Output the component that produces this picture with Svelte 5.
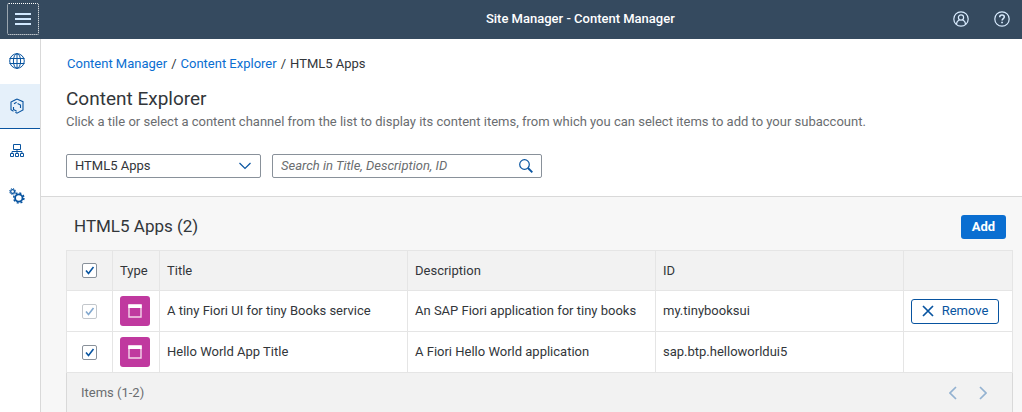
<script>
  const apps = $state([
    { title: 'A tiny Fiori UI for tiny Books service', description: 'An SAP Fiori application for tiny books', id: 'my.tinybooksui', checked: true, added: true },
    { title: 'Hello World App Title', description: 'A Fiori Hello World application', id: 'sap.btp.helloworldui5', checked: true, added: false }
  ]);
  let all = $state(true);
</script>

<div class="shell">
  <header class="bar">
    <button class="menu" aria-label="Menu">
      <svg width="16" height="12" viewBox="0 0 16 12"><path d="M0 1h16M0 6h16M0 11h16" stroke="#d1e8ff" stroke-width="2" /></svg>
    </button>
    <h1>Site Manager - Content Manager</h1>
    <div class="tools">
      <button aria-label="Profile">
        <svg width="16" height="16" viewBox="0 0 16 16" fill="none" stroke="#d9ecff" stroke-width="1.200"><circle cx="8" cy="8" r="7.200" /><circle cx="8" cy="6.500" r="2.600" /><path d="M3.600 13.300v-.6c0-2 1.400-3.100 2.900-3.700M12.400 13.300v-.6c0-2-1.400-3.100-2.900-3.700" /></svg>
      </button>
      <button aria-label="Help">
        <svg width="16" height="16" viewBox="0 0 16 16" fill="none" stroke="#d9ecff" stroke-width="1.200"><circle cx="8" cy="8" r="7.200" /><path d="M5.700 6.200C5.700 4.700 6.700 4 8 4s2.300.8 2.300 2c0 1.600-2.200 1.700-2.200 3.500" stroke-width="1.500" /><path d="M7.200 11.500h1.700" stroke-width="1.700" /></svg>
      </button>
    </div>
  </header>

  <div class="body">
    <nav aria-label="Main">
      <button aria-label="Site directory">
        <svg width="16" height="16" viewBox="0 0 16 16" fill="none" stroke="#0854a0"><circle cx="8" cy="8" r="7.300" /><ellipse cx="8" cy="8" rx="3.600" ry="7.300" /><path d="M8 .5v15M.5 5.500h15M.5 10.500h15" /></svg>
      </button>
      <button class="active" aria-label="Content manager" aria-current="page">
        <svg width="16" height="16" viewBox="0 0 16 16" fill="none" stroke="#0854a0" stroke-width="1.100"><path d="M6 2 8 1l6 2.700v8.200L8 15.200l-1.600-.9M6 2 2 4v7.800l2.500 1.400" /><path d="M4.500 9v2.500l3.200 1.700M5 5.700l2.600-1.400M8.600 5.500l2.900 1.500v3" /></svg>
      </button>
      <button aria-label="Subaccounts">
        <svg width="16" height="16" viewBox="0 0 16 16" fill="none" stroke="#0854a0"><path d="M4.500 1.500h7v5h-7zM1.500 10.500h3v3h-3zM6.500 10.500h3v3h-3zM11.500 10.500h3v3h-3zM8 6.500v4M3 10V8.500h10V10" /></svg>
      </button>
      <button aria-label="Settings">
        <svg width="16" height="16" viewBox="0 0 16 16" fill="none" stroke="#0854a0"><circle cx="9.800" cy="10" r="3.700" stroke-width="1.800" /><circle cx="9.800" cy="10" r="5.100" stroke-width="1.500" stroke-dasharray="2 2" /><circle cx="3.600" cy="3.500" r="1.900" stroke-width="1.200" /><circle cx="3.600" cy="3.500" r="3" stroke-width="1" stroke-dasharray="1.200 1.160" /></svg>
      </button>
    </nav>

    <main>
      <section class="intro">
        <div class="crumbs"><a href="#manager">Content Manager</a><span>/</span><a href="#explorer">Content Explorer</a><span>/</span>HTML5 Apps</div>
        <h2>Content Explorer</h2>
        <p>Click a tile or select a content channel from the list to display its content items, from which you can select items to add to your subaccount.</p>
        <div class="filters">
          <div class="field channel">
            <select aria-label="Content channel"><option>HTML5 Apps</option></select>
            <svg width="14" height="8" viewBox="0 0 14 8" fill="none" stroke="#0854a0" stroke-width="1.200"><path d="m1.500 1 5.500 5.500L12.500 1" /></svg>
          </div>
          <div class="field search">
            <input type="text" aria-label="Search" placeholder="Search in Title, Description, ID" />
            <button aria-label="Search">
              <svg width="14" height="14" viewBox="0 0 14 14" fill="none" stroke="#0854a0"><circle cx="5.500" cy="5.500" r="4.800" stroke-width="1.200" /><path d="m9 9 4.300 4.300" stroke-width="1.900" /></svg>
            </button>
          </div>
        </div>
      </section>

      <section class="list">
        <div class="toolbar"><h3>HTML5 Apps (2)</h3><button class="add">Add</button></div>
        <table>
          <colgroup><col class="c-check" /><col class="c-type" /><col /><col /><col /><col class="c-action" /></colgroup>
          <thead>
            <tr>
              <th class="check"><input type="checkbox" aria-label="Select all" bind:checked={all} /></th>
              <th>Type</th><th>Title</th><th>Description</th><th>ID</th><th aria-label="Actions"></th>
            </tr>
          </thead>
          <tbody>
            {#each apps as app}
              <tr>
                <td class="check"><input type="checkbox" aria-label={app.title} bind:checked={app.checked} disabled={app.added} /></td>
                <td>
                  <span class="tile"><svg width="14" height="14" viewBox="0 0 14 14"><path d="M1 1h12v12H1z" fill="none" stroke="#f3d3e9" stroke-width="1.400" /><path d="M.3.5h13.400V4H.3z" fill="#fff" /></svg></span>
                </td>
                <td>{app.title}</td>
                <td>{app.description}</td>
                <td>{app.id}</td>
                <td>
                  {#if app.added}
                    <button class="remove"><svg width="12" height="12" viewBox="0 0 12 12" stroke="#0854a0" stroke-width="1.700"><path d="m1 1 10 10M11 1 1 11" /></svg>Remove</button>
                  {/if}
                </td>
              </tr>
            {/each}
          </tbody>
        </table>
        <footer>
          <span>Items (1-2)</span>
          <div class="pager">
            <button aria-label="Previous page" disabled><svg width="8" height="14" viewBox="0 0 8 14"><path d="M7 1 1 7l6 6" /></svg></button>
            <button aria-label="Next page" disabled><svg width="8" height="14" viewBox="0 0 8 14"><path d="m1 1 6 6-6 6" /></svg></button>
          </div>
        </footer>
      </section>
    </main>
  </div>
</div>

<style>
  :global(body) { margin: 0; overflow: hidden; }
  * { box-sizing: border-box; }
  button { padding: 0; border: 0; background: none; font: inherit; cursor: pointer; }
  svg { display: block; flex: none; }
  h1, h2, h3, p { margin: 0; font-weight: 400; }
  .shell { min-height: 100vh; display: flex; flex-direction: column; font: 13px/16px Roboto, Arial, sans-serif; color: #32363a; background: #f7f7f7; }

  .bar { height: 39px; display: grid; grid-template-columns: 10fr auto 7fr; align-items: center; padding: 0 12px 2px 7px; background: #354a5f; color: #fff; }
  .menu { width: 32px; height: 32px; display: grid; place-items: center; border: 1px dotted #fff; border-radius: 2px; }
  h1 { font-size: 13px; line-height: 16px; font-weight: 500; }
  .tools { display: flex; justify-content: flex-end; gap: 25px; }

  .body { flex: 1; display: flex; }
  nav { width: 41px; flex: none; background: #fff; border-right: 1px solid #d9d9d9; }
  nav button { width: 100%; height: 45px; display: grid; place-items: center; padding-right: 6px; border-bottom: 1px solid transparent; }
  nav .active { background: #e5f0fa; border-color: #0854a0; }

  main { flex: 1; min-width: 0; display: flex; flex-direction: column; }
  .intro { padding: 17px 25px 18px; background: #fff; border-bottom: 1px solid #d9d9d9; }
  .crumbs { display: flex; gap: 4px; padding-left: 1px; }
  a { color: #0a6ed1; text-decoration: none; }
  h2 { margin-top: 16px; font-size: 19px; line-height: 22px; }
  p { margin-top: 4px; color: #6a6d70; }
  .filters { display: flex; gap: 11px; margin-top: 24px; }
  .field { height: 24px; display: flex; align-items: center; border: 1px solid #89919a; border-radius: 2px; background: #fff; }
  .channel { width: 195px; position: relative; }
  .channel svg { position: absolute; right: 8px; pointer-events: none; }
  select { width: 100%; height: 100%; appearance: none; padding: 0 8px; border: 0; background: none; font: inherit; color: inherit; }
  .search { width: 270px; padding-right: 8px; }
  .search input { flex: 1; min-width: 0; padding: 0 8px; border: 0; background: none; font: inherit; }
  .search input::placeholder { color: #6a6d70; font-style: italic; opacity: 1; }

  .list { flex: 1; display: flex; flex-direction: column; padding: 0 9px 0 25px; }
  .toolbar { height: 53px; display: flex; align-items: center; justify-content: space-between; padding: 6px 7px 0 8px; }
  h3 { font-size: 17px; line-height: 22px; padding-bottom: 2px; }
  .add { width: 45px; height: 24px; border-radius: 3px; background: #0a6ed1; color: #fff; font-weight: 700; }
  table { width: 100%; table-layout: fixed; border-collapse: collapse; }
  .c-check { width: 46px; }
  .c-type { width: 47px; }
  .c-action { width: 109px; }
  tr { height: 41px; }
  thead tr { height: 40px; }
  th, td { padding: 0 7px; border: 1px solid #e5e5e5; text-align: left; font-weight: 400; white-space: nowrap; }
  th { background: #f2f2f2; }
  td { background: #fff; }
  .check { text-align: center; }
  input[type='checkbox'] { appearance: none; display: block; width: 15px; height: 15px; margin: 0 auto; border: 1px solid #89919a; border-radius: 2px; background: #fff; }
  input[type='checkbox']:checked { background: #fff url("data:image/svg+xml,%3Csvg xmlns='http://www.w3.org/2000/svg' viewBox='0 0 13 13'%3E%3Cpath d='m3 6.500 2.500 3L10.500 3' fill='none' stroke='%230854a0' stroke-width='1.600'/%3E%3C/svg%3E"); }
  input[type='checkbox']:disabled { opacity: 0.5; }
  .tile { width: 30px; height: 30px; display: grid; place-items: center; border-radius: 3px; background: #c0399f; }
  .remove { width: 88px; height: 25px; display: flex; align-items: center; justify-content: center; gap: 8px; border: 1px solid #0854a0; border-radius: 3px; color: #0854a0; }
  footer { flex: 1; min-height: 39px; display: flex; align-items: center; justify-content: space-between; padding: 0 25px 0 14px; background: #f2f2f2; border: solid #d9d9d9; border-width: 0 1px; color: #6a6d70; }
  .pager { display: flex; gap: 22px; }
  .pager svg { fill: none; stroke: #0854a0; stroke-width: 1.700; opacity: 0.4; }
</style>
